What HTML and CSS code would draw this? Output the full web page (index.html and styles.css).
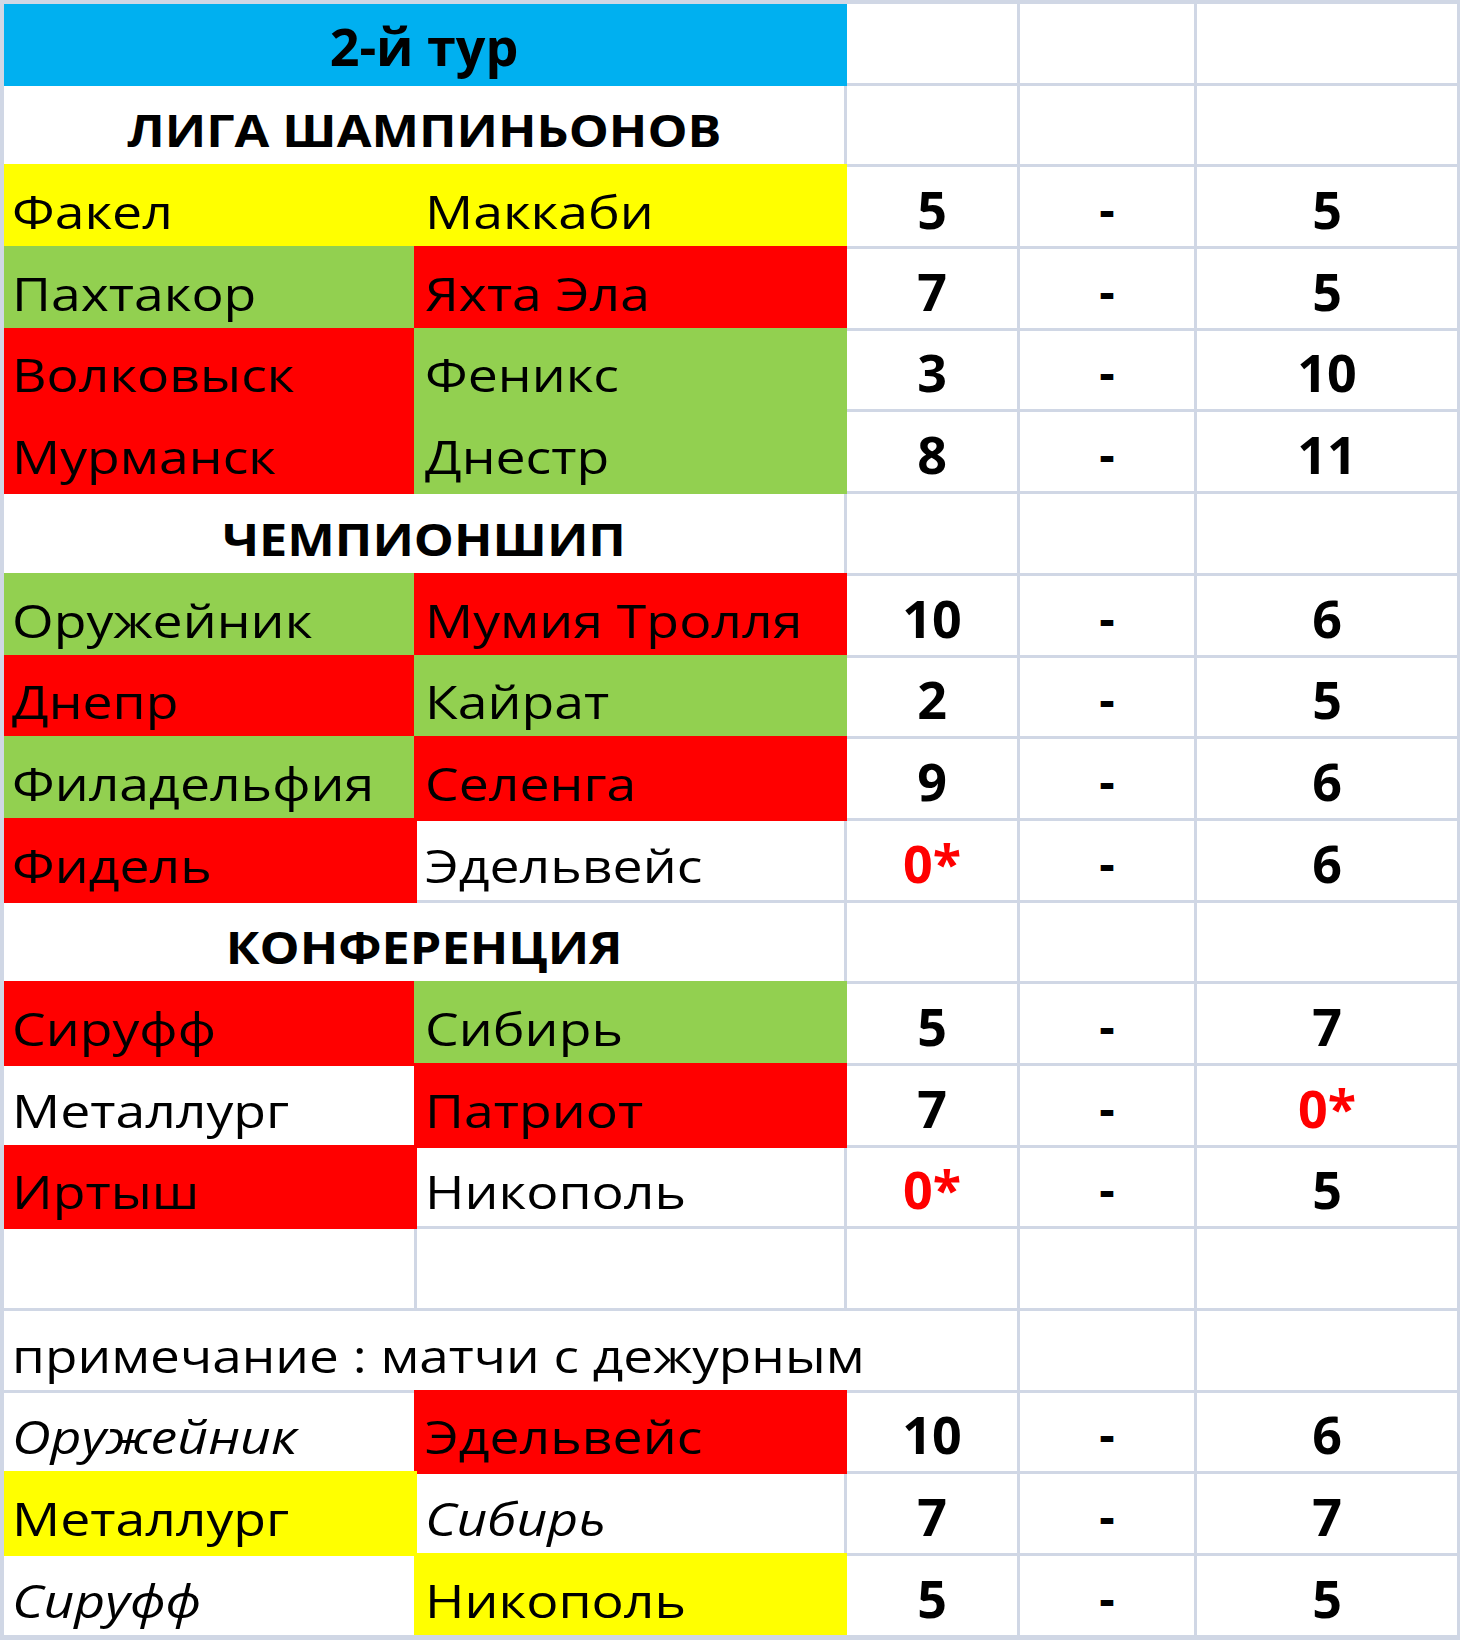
FILE: index.html
```html
<!DOCTYPE html>
<html lang="ru">
<head>
<meta charset="utf-8">
<title>2-й тур</title>
<link rel="stylesheet" href="styles.css">
</head>
<body>
<div class="sheet">
  <div class="grid">
    <!-- row 1 -->
    <div class="c merged blue title">2-й тур</div>
    <div class="c"></div><div class="c"></div><div class="c"></div>
    <!-- row 2 -->
    <div class="c merged head"><span class="t">ЛИГА ШАМПИНЬОНОВ</span></div>
    <div class="c"></div><div class="c"></div><div class="c"></div>
    <!-- row 3 -->
    <div class="c team yellow"><span class="t">Факел</span></div>
    <div class="c team yellow"><span class="t">Маккаби</span></div>
    <div class="c score">5</div><div class="c dash">-</div><div class="c score">5</div>
    <!-- row 4 -->
    <div class="c team green"><span class="t">Пахтакор</span></div>
    <div class="c team red"><span class="t">Яхта Эла</span></div>
    <div class="c score">7</div><div class="c dash">-</div><div class="c score">5</div>
    <!-- row 5 -->
    <div class="c team red"><span class="t">Волковыск</span></div>
    <div class="c team green"><span class="t">Феникс</span></div>
    <div class="c score">3</div><div class="c dash">-</div><div class="c score">10</div>
    <!-- row 6 -->
    <div class="c team red"><span class="t">Мурманск</span></div>
    <div class="c team green"><span class="t">Днестр</span></div>
    <div class="c score">8</div><div class="c dash">-</div><div class="c score">11</div>
    <!-- row 7 -->
    <div class="c merged head"><span class="t">ЧЕМПИОНШИП</span></div>
    <div class="c"></div><div class="c"></div><div class="c"></div>
    <!-- row 8 -->
    <div class="c team green"><span class="t">Оружейник</span></div>
    <div class="c team red"><span class="t">Мумия Тролля</span></div>
    <div class="c score">10</div><div class="c dash">-</div><div class="c score">6</div>
    <!-- row 9 -->
    <div class="c team red"><span class="t">Днепр</span></div>
    <div class="c team green"><span class="t">Кайрат</span></div>
    <div class="c score">2</div><div class="c dash">-</div><div class="c score">5</div>
    <!-- row 10 -->
    <div class="c team green"><span class="t">Филадельфия</span></div>
    <div class="c team red"><span class="t">Селенга</span></div>
    <div class="c score">9</div><div class="c dash">-</div><div class="c score">6</div>
    <!-- row 11 -->
    <div class="c team red"><span class="t">Фидель</span></div>
    <div class="c team"><span class="t">Эдельвейс</span></div>
    <div class="c score forfeit">0*</div><div class="c dash">-</div><div class="c score">6</div>
    <!-- row 12 -->
    <div class="c merged head"><span class="t">КОНФЕРЕНЦИЯ</span></div>
    <div class="c"></div><div class="c"></div><div class="c"></div>
    <!-- row 13 -->
    <div class="c team red"><span class="t">Сируфф</span></div>
    <div class="c team green"><span class="t">Сибирь</span></div>
    <div class="c score">5</div><div class="c dash">-</div><div class="c score">7</div>
    <!-- row 14 -->
    <div class="c team"><span class="t">Металлург</span></div>
    <div class="c team red"><span class="t">Патриот</span></div>
    <div class="c score">7</div><div class="c dash">-</div><div class="c score forfeit">0*</div>
    <!-- row 15 -->
    <div class="c team red"><span class="t">Иртыш</span></div>
    <div class="c team"><span class="t">Никополь</span></div>
    <div class="c score forfeit">0*</div><div class="c dash">-</div><div class="c score">5</div>
    <!-- row 16 -->
    <div class="c"></div><div class="c"></div><div class="c"></div><div class="c"></div><div class="c"></div>
    <!-- row 17 -->
    <div class="c note"><span class="t">примечание : матчи с дежурным</span></div>
    <div class="c"></div><div class="c"></div>
    <!-- row 18 -->
    <div class="c team italic"><span class="t">Оружейник</span></div>
    <div class="c team red"><span class="t">Эдельвейс</span></div>
    <div class="c score">10</div><div class="c dash">-</div><div class="c score">6</div>
    <!-- row 19 -->
    <div class="c team yellow"><span class="t">Металлург</span></div>
    <div class="c team italic"><span class="t">Сибирь</span></div>
    <div class="c score">7</div><div class="c dash">-</div><div class="c score">7</div>
    <!-- row 20 -->
    <div class="c team italic"><span class="t">Сируфф</span></div>
    <div class="c team yellow"><span class="t">Никополь</span></div>
    <div class="c score">5</div><div class="c dash">-</div><div class="c score">5</div>
  </div>
</div>
</body>
</html>
```

FILE: styles.css
```css
html, body {
  margin: 0;
  padding: 0;
  background: #ffffff;
}

.sheet {
  width: 1460px;
  height: 1640px;
  box-sizing: border-box;
  padding: 4px 3px 0 4px;
  background: #d0d7e5;
  overflow: hidden;
}

.grid {
  display: grid;
  grid-template-columns: 410px 427px 170px 174px 260px;
  grid-template-rows: repeat(20, 78.7px);
  gap: 3px;
  background: #d0d7e5;
  overflow: hidden;
  font-family: "Open Sans", "Noto Sans", "DejaVu Sans", sans-serif;
  color: #000000;
}

.c {
  background: #ffffff;
  display: flex;
  align-items: flex-end;
  box-sizing: border-box;
  padding: 0 0 12px 0;
  line-height: 1;
  white-space: nowrap;
  overflow: visible;
}

.t {
  display: inline-block;
  transform-origin: left bottom;
}

.merged {
  grid-column: span 2;
  justify-content: center;
}

.note {
  grid-column: span 3;
  padding-left: 8px;
  font-size: 45px;
  font-weight: 500;
}

.note .t {
  transform: scaleX(1.18);
}

.title {
  font-size: 52px;
  font-weight: 700;
  padding-bottom: 11px;
}

.head {
  font-size: 45px;
  font-weight: 700;
}

.head .t {
  transform-origin: center bottom;
  transform: scaleX(1.12);
}

.team {
  padding-left: 8px;
  font-size: 45px;
  font-weight: 500;
}

.team .t {
  transform: scaleX(1.19);
}

.italic {
  font-style: italic;
}

.score {
  justify-content: center;
  font-size: 52px;
  font-weight: 700;
  padding-bottom: 11px;
}

.dash {
  justify-content: center;
  font-size: 48px;
  font-weight: 700;
  padding-bottom: 13px;
}

.forfeit {
  color: #ff0000;
}

.blue {
  background: #00b0f0;
  box-shadow: 0 0 0 3px #00b0f0;
}

.yellow {
  background: #ffff00;
  box-shadow: 0 0 0 3px #ffff00;
}

.green {
  background: #92d050;
  box-shadow: 0 0 0 3px #92d050;
}

.red {
  background: #ff0000;
  box-shadow: 0 0 0 3px #ff0000;
}
```
